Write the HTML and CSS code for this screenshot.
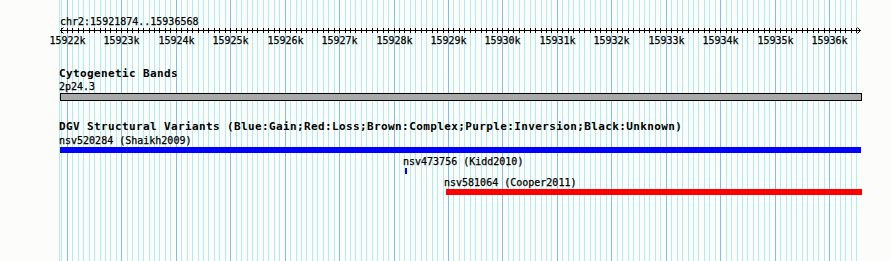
FILE: index.html
```html
<!DOCTYPE html>
<html>

<head>
    <title>chr2:15921874..15936568</title>
    <meta charset="UTF-8">
    <link rel="stylesheet" href="styles.css">
</head>

<body>
    <div class="panel">
        <svg class="grid" id="grid" width="890" height="261"></svg>

        <svg class="ruler" id="ruler" width="890" height="50">
            <text x="60" y="25">chr2:15921874..15936568</text>
            <rect class="axis" x="60" y="30" width="801" height="1"></rect>
            <path class="arrow" d="M63.5 27.5 L60.5 30.5 L63.5 33.5"></path>
            <path class="arrow" d="M857.5 27.5 L860.5 30.5 L857.5 33.5"></path>
        </svg>

        <div class="track track-cyto">
            <div class="track-title">Cytogenetic Bands</div>
            <div class="band-label">2p24.3</div>
            <div class="band"></div>
        </div>

        <div class="track track-dgv">
            <div class="track-title">DGV Structural Variants (Blue:Gain;Red:Loss;Brown:Complex;Purple:Inversion;Black:Unknown)</div>

            <div class="feature clipped" style="margin-left: 60px; width: 801px;">
                <div class="feature-label">nsv520284 (Shaikh2009)</div>
                <div class="feature-bar gain"></div>
            </div>

            <div class="feature" style="margin-left: 405px; width: 2px;">
                <div class="feature-label">nsv473756 (Kidd2010)</div>
                <div class="feature-bar gain"></div>
            </div>

            <div class="feature" style="margin-left: 446px; width: 416px;">
                <div class="feature-label">nsv581064 (Cooper2011)</div>
                <div class="feature-bar loss"></div>
            </div>
        </div>
    </div>

    <script src="script.js"></script>
</body>

</html>
```

FILE: styles.css
```css
body {
    margin: 0;
    padding: 0;
    background-color: #fcfdfa;
    font-family: "DejaVu Sans Mono", "Liberation Mono", monospace;
    color: #000;
}

.panel {
    position: relative;
    z-index: 0;
    width: 890px;
    height: 261px;
    overflow: hidden;
}

/* grid sits under the tracks */
.grid {
    position: absolute;
    top: 0;
    left: 0;
    z-index: -1;
    shape-rendering: crispEdges;
}

.grid .minor {
    fill: #afeeee;
}

.grid .major {
    fill: #80bfe8;
}

.ruler {
    display: block;
    shape-rendering: crispEdges;
}

.ruler text {
    font-family: "DejaVu Sans Mono", "Liberation Mono", monospace;
    font-size: 10px;
    fill: #000;
    stroke: #000;
    stroke-width: 0.25px;
}

.ruler .axis,
.ruler .tick {
    fill: #000;
}

.ruler .arrow {
    fill: none;
    stroke: #000;
    stroke-width: 1;
    shape-rendering: auto;
}

.track-title {
    margin-left: 59px;
    font-size: 11px;
    font-weight: bold;
    letter-spacing: 0.38px;
    line-height: 12px;
    height: 12px;
    white-space: nowrap;
}

.track-cyto {
    margin-top: 18px;
}

.track-dgv {
    margin-top: 20px;
}

.band-label,
.feature-label {
    font-size: 10px;
    line-height: 13px;
    height: 13px;
    white-space: nowrap;
    -webkit-text-stroke: 0.25px #000;
}

.band-label {
    margin-left: 59px;
}

.band {
    margin-left: 60px;
    width: 802px;
    height: 8px;
    box-sizing: border-box;
    border: 1px solid #000;
    background-color: #a9a9a9;
}

.feature {
    margin-top: 2px;
}

.track-title + .feature {
    margin-top: 1px;
}

.feature-label {
    margin-left: -2px;
}

.feature.clipped .feature-label {
    margin-left: -1px;
}

.feature-bar {
    height: 6px;
}

.gain {
    background-color: #0000ff;
}

.loss {
    background-color: #ff0000;
}
```

FILE: script.js
```js
var start = 15921874;
var end = 15936568;
var left = 60;
var span = 800;
var NS = 'http://www.w3.org/2000/svg';

function toX(bp) {
    return Math.round(left + (bp - start) * span / (end - start));
}

function add(parent, tag, attrs, text) {
    var el = document.createElementNS(NS, tag);
    for (var k in attrs) {
        el.setAttribute(k, attrs[k]);
    }
    if (text) el.textContent = text;
    parent.appendChild(el);
    return el;
}

var grid = document.getElementById('grid');
var ruler = document.getElementById('ruler');

// left edge line
add(grid, 'rect', { x: 59, y: 0, width: 1, height: 261, 'class': 'minor' });

for (var bp = 15921900; bp < end; bp += 100) {
    var x = toX(bp);
    var major = bp % 1000 === 0;
    add(grid, 'rect', { x: x, y: 0, width: 1, height: 261, 'class': major ? 'major' : 'minor' });
    add(ruler, 'rect', { x: x, y: 28, width: 1, height: 5, 'class': 'tick' });
    if (major) {
        add(ruler, 'text', { x: x + 0.5, y: 44, 'text-anchor': 'middle' }, (bp / 1000) + 'k');
    }
}
```
